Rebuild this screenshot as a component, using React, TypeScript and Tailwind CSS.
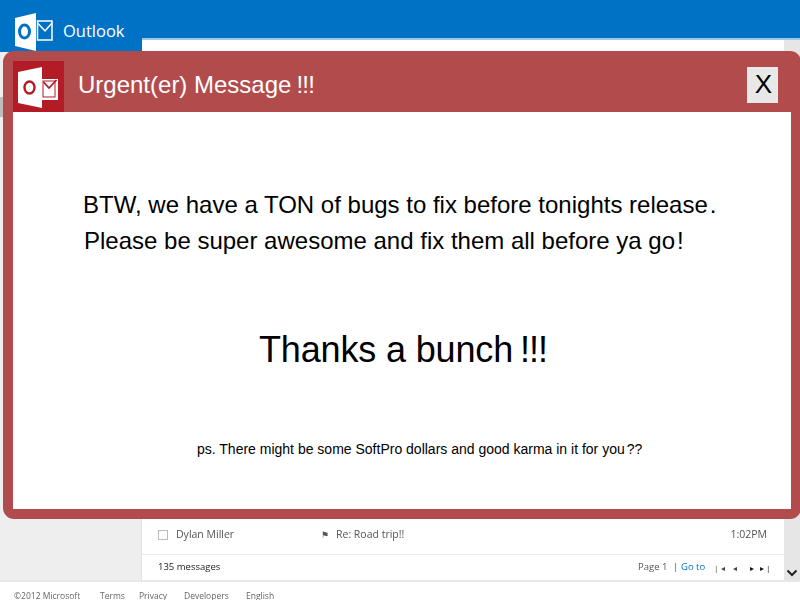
const sans = "font-['Liberation_Sans',Arial,sans-serif]";

function OutlookLogo() {
  return (
    <svg width="40" height="40" viewBox="0 0 40 40" className="ml-[14px] mt-[12px] shrink-0">
      <path d="M1 6 L22 1 V39 L1 34 Z" fill="#fff" />
      <ellipse cx="10.5" cy="19.5" rx="5" ry="6.5" fill="none" stroke="#0072c6" strokeWidth="3" />
      <rect x="23.5" y="9" width="14.5" height="19" fill="#0072c6" stroke="#fff" strokeWidth="1.5" />
      <path d="M23.5 11 L31 19 L38 11" fill="none" stroke="#fff" strokeWidth="1.5" />
    </svg>
  );
}

function RedLogo() {
  return (
    <div className="w-[51px] h-[51px] bg-[#b31b27] flex items-center justify-center shrink-0">
      <svg width="44" height="44" viewBox="0 0 44 44">
        <path d="M1 7 L25 2 V43 L1 38 Z" fill="#fff" />
        <ellipse cx="12.5" cy="22.5" rx="5" ry="6" fill="none" stroke="#b31b27" strokeWidth="2.4" />
        <rect x="25" y="14" width="16" height="21" fill="#fff" />
        <rect x="26" y="16" width="12" height="16" fill="#fff" stroke="#b31b27" strokeWidth="1" />
        <path d="M26.5 17 L32 23 L39.5 15" fill="none" stroke="#b31b27" strokeWidth="1.8" />
      </svg>
    </div>
  );
}

function Background() {
  return (
    <div className="h-[600px] w-[800px] flex flex-col bg-white overflow-hidden">
      <div className="flex flex-1 min-h-0">
        <div className="w-[142px] shrink-0 flex flex-col">
          <div className="h-[52px] bg-[#0072c6] flex items-start">
            <OutlookLogo />
            <span className="ml-[9px] mt-[19px] text-[16.5px] leading-[24px] text-white font-['Open_Sans',sans-serif]">Outlook</span>
          </div>
          <div className="flex-1 bg-[#eeeeee] border-r border-[#e2e2e2] flex flex-col">
            <div className="h-[45px]" />
            <div className="h-[20px] w-[3px] bg-[#bdbdbd]" />
          </div>
        </div>
        <div className="flex-1 flex flex-col min-w-0">
          <div className="h-[38px] bg-[#0072c6]" />
          <div className="h-[2px] bg-[#9cc7e8]" />
          <div className="flex-1 flex min-h-0">
            <div className="flex-1 flex flex-col justify-end min-w-0 text-[10.5px] text-[#555] font-['Open_Sans',sans-serif]">
              <div className="h-[43px] flex items-center pl-[16px] pt-[4px] border-b border-[#ececec] blur-[0.6px]">
                <span className="w-[10px] h-[10px] border border-[#bbb] mr-[8px]" />
                <span className="w-[145px]">Dylan Miller</span>
                <span className="text-[9px] w-[15px]">⚑</span>
                <span className="flex-1">Re: Road trip!!</span>
                <span className="mr-[17px]">1:02PM</span>
              </div>
              <div className="h-[25px] flex items-center pl-[16px] justify-between blur-[0.6px]">
                <span className="text-[#222] text-[9.5px]">135 messages</span>
                <span className="flex items-center text-[9.5px] mr-[15px]">
                  <span className="w-[35px]">Page 1</span>
                  <span className="w-[8px]">|</span>
                  <span className="w-[33px] text-[#0072c6]">Go to</span>
                  <span className="w-[36px] text-[#444] tracking-[3px] text-[8px]">|◂ ◂</span>
                  <span className="w-[19px] text-[#111] tracking-[2px] text-[8px] whitespace-nowrap">▸ ▸|</span>
                </span>
              </div>
            </div>
            <div className="w-[16px] shrink-0 bg-[#e6e6e6] flex flex-col justify-end items-center pb-[3px]">
              <svg width="12" height="8" viewBox="0 0 12 8">
                <path d="M1.5 1.5 L6 6 L10.5 1.5" fill="none" stroke="#222" strokeWidth="2" />
              </svg>
            </div>
          </div>
        </div>
      </div>
      <div className="h-[20px] shrink-0 border-t-2 border-[#e8e8e8] flex items-end pl-[14px] text-[8.5px] leading-[9px] text-[#666] blur-[0.6px] font-['Open_Sans',sans-serif]">
        <span className="w-[86px]">©2012 Microsoft</span>
        <span className="w-[39px]">Terms</span>
        <span className="w-[45px]">Privacy</span>
        <span className="w-[62px]">Developers</span>
        <span>English</span>
      </div>
    </div>
  );
}

export default function App() {
  return (
    <div className="relative w-[800px] h-[600px] overflow-hidden">
      <Background />
      <div className={`${sans} absolute left-[3px] top-[51px] w-[798px] h-[468px] bg-[#b24c4c] rounded-[11px] p-[10px] flex flex-col`}>
        <div className="h-[51px] flex items-center shrink-0">
          <RedLogo />
          <span className="ml-[14px] mb-[3px] text-[24px] leading-[28px] text-white">Urgent(er) Message<span className="ml-[5px] tracking-[-0.8px]">!!!</span></span>
          <button className="ml-auto mr-[13px] mb-[3px] pl-[2px] pb-[2px] w-[31px] h-[36px] bg-[#e8e8e8] text-black text-[26px] leading-[32px] flex items-center justify-center">X</button>
        </div>
        <div className="w-[778px] h-[397px] bg-white flex flex-col text-black">
          <p className="mt-[75px] text-[24px] leading-[36px] whitespace-nowrap">
            <span className="block ml-[70px]">BTW, we have a TON of bugs to fix before tonights release<span className="ml-[2px]">.</span></span>
            <span className="block ml-[71px]">Please be super awesome and fix them all before ya go<span className="ml-[2px]">!</span></span>
          </p>
          <p className="mt-[70px] ml-[246px] text-[36px] leading-[42px] tracking-[-0.15px] whitespace-nowrap">Thanks a bunch<span className="ml-[7px] tracking-[-1px]">!!!</span></p>
          <p className="mt-[69px] ml-[184px] text-[14px] leading-[18px] whitespace-nowrap">ps. There might be some SoftPro dollars and good karma in it for you<span className="ml-[2px]">??</span></p>
        </div>
      </div>
    </div>
  );
}
